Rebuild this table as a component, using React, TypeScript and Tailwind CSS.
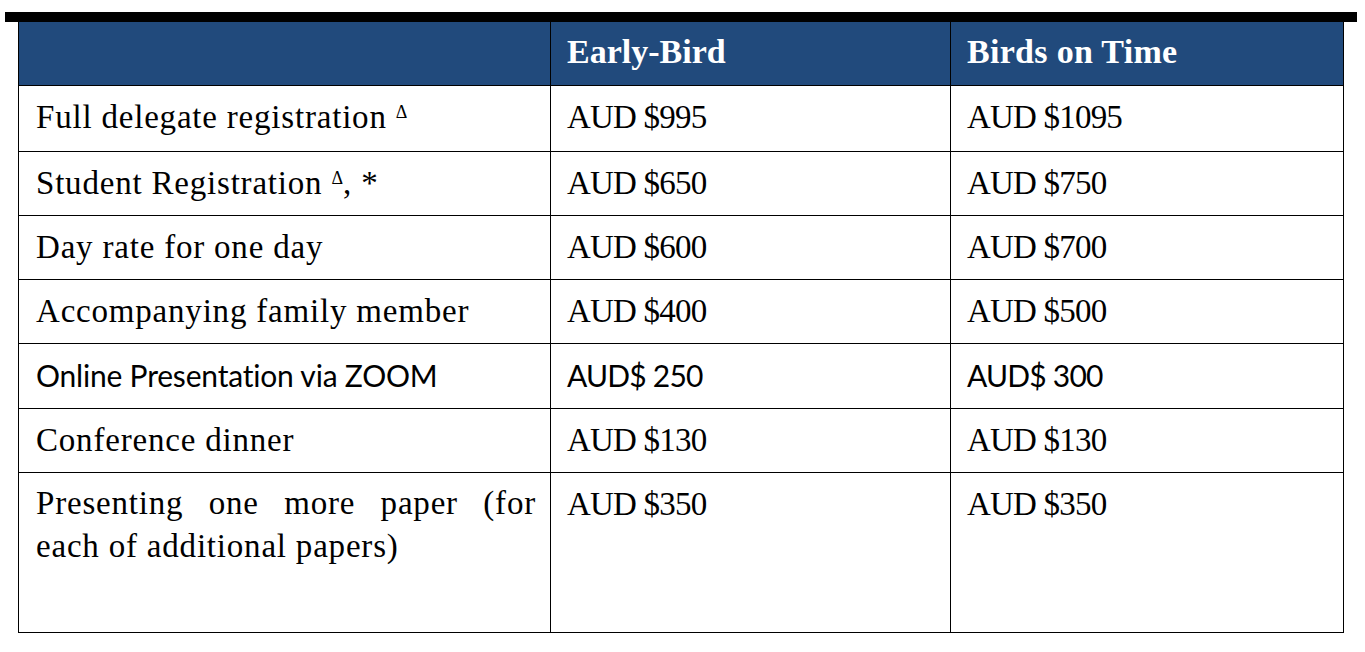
const serif = "font-['Liberation_Serif','Times_New_Roman',serif]";
const sans = "font-['Lato','Liberation_Sans',sans-serif]";

type Row = {
  label: React.ReactNode;
  early: string;
  onTime: string;
  h: string;
  font?: string;
};

const Delta = () => (
  <sup className="relative top-0 text-[18px] leading-none align-[0.55em] tracking-normal">Δ</sup>
);

const rows: Row[] = [
  {
    label: (
      <>
        Full delegate registration <Delta />
      </>
    ),
    early: "AUD $995",
    onTime: "AUD $1095",
    h: "h-[66px]",
  },
  {
    label: (
      <>
        Student Registration <Delta />, *
      </>
    ),
    early: "AUD $650",
    onTime: "AUD $750",
    h: "h-[64px]",
  },
  { label: "Day rate for one day", early: "AUD $600", onTime: "AUD $700", h: "h-[64px]" },
  { label: "Accompanying family member", early: "AUD $400", onTime: "AUD $500", h: "h-[64px]" },
  {
    label: "Online Presentation via ZOOM",
    early: "AUD$ 250",
    onTime: "AUD$ 300",
    h: "h-[65px]",
    font: sans,
  },
  { label: "Conference dinner", early: "AUD $130", onTime: "AUD $130", h: "h-[64px]" },
];

export default function App() {
  return (
    <div className="min-h-[652px] bg-white pt-[12px] text-black">
      {/* top rule */}
      <div className="ml-[5px] h-[10px] w-[1352px] bg-black" />

      <div className="ml-[18px] grid w-[1326px] grid-cols-[532px_400px_393px] border-l border-black">
        {/* header */}
        <div className="h-[64px] border-r border-b border-black bg-[#214a7c]" />
        <div
          className={`h-[64px] border-r border-b border-black bg-[#214a7c] pl-4 pt-[10px] text-[34px] font-bold leading-[40px] text-white ${serif}`}
        >
          Early-Bird
        </div>
        <div
          className={`h-[64px] border-r border-b border-black bg-[#214a7c] pl-4 pt-[10px] text-[34px] font-bold leading-[40px] tracking-[0.3px] text-white ${serif}`}
        >
          Birds on Time
        </div>

        {rows.map((r, i) => {
          const isSans = !!r.font;
          const f = r.font ?? serif;
          const size = isSans ? "text-[30px]" : "text-[33px]";
          const labelTrack = isSans ? "tracking-[-0.2px]" : "tracking-[0.8px]";
          const numTrack = isSans ? "tracking-[-0.8px]" : "tracking-[-0.8px]";
          return (
            <div key={i} className="contents">
              <div
                className={`${r.h} border-r border-b border-black pl-[17px] pt-[11px] leading-[40px] ${size} ${labelTrack} ${f}`}
              >
                {r.label}
              </div>
              <div
                className={`${r.h} border-r border-b border-black pl-4 pt-[11px] leading-[40px] ${size} ${numTrack} ${f}`}
              >
                {r.early}
              </div>
              <div
                className={`${r.h} border-r border-b border-black pl-4 pt-[11px] leading-[40px] ${size} ${numTrack} ${f}`}
              >
                {r.onTime}
              </div>
            </div>
          );
        })}

        {/* last, taller row */}
        <div
          className={`h-[160px] border-r border-b border-black pl-[17px] pr-[14px] pt-[9px] text-[33px] leading-[43px] tracking-[0.8px] ${serif}`}
        >
          <div className="text-justify [text-align-last:justify]">
            Presenting one more paper (for
          </div>
          <div>each of additional papers)</div>
        </div>
        <div
          className={`h-[160px] border-r border-b border-black pl-4 pt-[11px] text-[33px] leading-[40px] tracking-[-0.8px] ${serif}`}
        >
          AUD $350
        </div>
        <div
          className={`h-[160px] border-r border-b border-black pl-4 pt-[11px] text-[33px] leading-[40px] tracking-[-0.8px] ${serif}`}
        >
          AUD $350
        </div>
      </div>
    </div>
  );
}
